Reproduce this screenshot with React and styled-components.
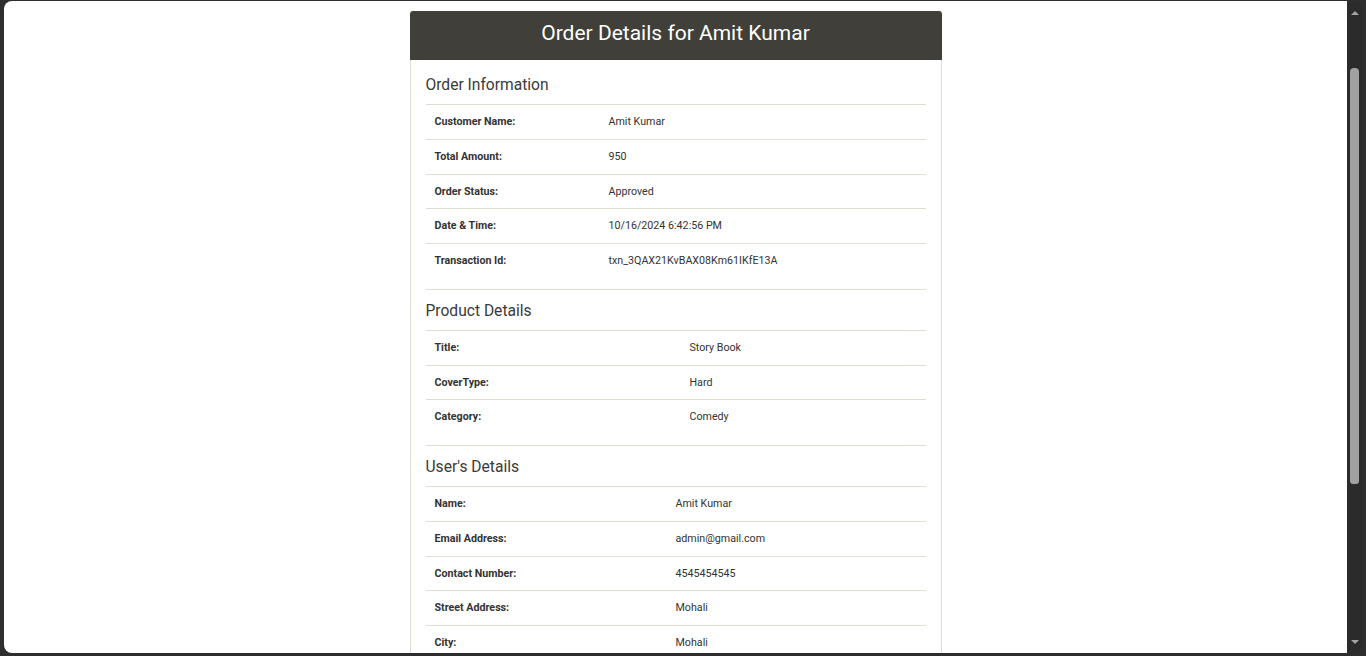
import React from "react";
import styled, { createGlobalStyle } from "styled-components";

const Global = createGlobalStyle`
  html, body { margin: 0; padding: 0; height: 100%; overflow: hidden; }
  body { background: #2e2e2e; font-family: Roboto, "Liberation Sans", Arial, sans-serif; }
  #root { height: 100%; }
`;

const Frame = styled.div`
  display: flex;
  height: 656px;
  box-sizing: border-box;
  padding: 1px 4px 3px 4px;
  background: #2e2e2e;
`;

const Viewport = styled.div`
  flex: 1;
  background: #fff;
  border-radius: 8px 0 0 8px;
  overflow: hidden;
  display: flex;
  justify-content: center;
  align-items: flex-start;
`;

const ScrollTrack = styled.div`
  width: 15px;
  background: #2b2b2b;
  border-radius: 0 8px 8px 0;
  display: flex;
  flex-direction: column;
  align-items: center;
  padding: 10px 0 9px;
  box-sizing: border-box;
`;

const Arrow = styled.div`
  width: 0;
  height: 0;
  border-left: 4px solid transparent;
  border-right: 4px solid transparent;
  ${(p) => (p.$down ? "border-top: 4px solid #a3a3a3;" : "border-bottom: 4px solid #a3a3a3;")}
`;

const ThumbArea = styled.div`
  flex: 1;
  width: 100%;
  display: flex;
  justify-content: center;
  padding-top: 53px;
`;

const Thumb = styled.div`
  width: 9px;
  height: 416px;
  background: #a1a1a1;
  border-radius: 4px 4px 3px 3px;
`;

const Card = styled.div`
  width: 532px;
  margin-top: 10px;
  border: 1px solid #e2ddd2;
  border-radius: 4px;
  box-sizing: border-box;
  background: #fff;
`;

const CardHeader = styled.div`
  height: 49px;
  background: #403f3a;
  border-radius: 3px 3px 0 0;
  display: flex;
  align-items: center;
  justify-content: center;
  margin: -1px -1px 0;
  padding-bottom: 6px;
  box-sizing: border-box;
`;

const Title = styled.h2`
  margin: 0;
  color: #fff;
  font-size: 21px;
  font-weight: 400;
`;

const CardBody = styled.div`
  padding: 4px 15px 0;
`;

const Section = styled.section`
  & + & {
    border-top: 1px solid #e2ddd2;
  }
`;

const SectionTitle = styled.h3`
  margin: 11px 0 9px;
  font-size: 15.6px;
  line-height: 20px;
  font-weight: 400;
  color: #3a3a3a;
`;

const Table = styled.table`
  width: 100%;
  border-collapse: collapse;
  margin-bottom: 11px;
  font-size: 10.7px;
  color: #333;
`;

const Row = styled.tr`
  border-top: 1px solid #e2ddd2;
`;

const Label = styled.td`
  padding: 9px;
  line-height: 15.75px;
  font-weight: 700;
  width: ${(p) => p.$w}px;
  box-sizing: border-box;
`;

const Value = styled.td`
  padding: 9px 9px 9px 0;
  line-height: 15.75px;
`;

const sections = [
  {
    title: "Order Information",
    w: 183,
    rows: [
      ["Customer Name:", "Amit Kumar"],
      ["Total Amount:", "950"],
      ["Order Status:", "Approved"],
      ["Date & Time:", "10/16/2024 6:42:56 PM"],
      ["Transaction Id:", "txn_3QAX21KvBAX08Km61IKfE13A"],
    ],
  },
  {
    title: "Product Details",
    w: 264,
    rows: [
      ["Title:", "Story Book"],
      ["CoverType:", "Hard"],
      ["Category:", "Comedy"],
    ],
  },
  {
    title: "User's Details",
    w: 250,
    rows: [
      ["Name:", "Amit Kumar"],
      ["Email Address:", "admin@gmail.com"],
      ["Contact Number:", "4545454545"],
      ["Street Address:", "Mohali"],
      ["City:", "Mohali"],
    ],
  },
];

export default function App() {
  return (
    <>
      <Global />
      <Frame>
        <Viewport>
          <Card>
            <CardHeader>
              <Title>Order Details for Amit Kumar</Title>
            </CardHeader>
            <CardBody>
              {sections.map((s) => (
                <Section key={s.title}>
                  <SectionTitle>{s.title}</SectionTitle>
                  <Table>
                    <tbody>
                      {s.rows.map(([k, v]) => (
                        <Row key={k}>
                          <Label $w={s.w}>{k}</Label>
                          <Value>{v}</Value>
                        </Row>
                      ))}
                    </tbody>
                  </Table>
                </Section>
              ))}
            </CardBody>
          </Card>
        </Viewport>
        <ScrollTrack>
          <Arrow />
          <ThumbArea>
            <Thumb />
          </ThumbArea>
          <Arrow $down />
        </ScrollTrack>
      </Frame>
    </>
  );
}
